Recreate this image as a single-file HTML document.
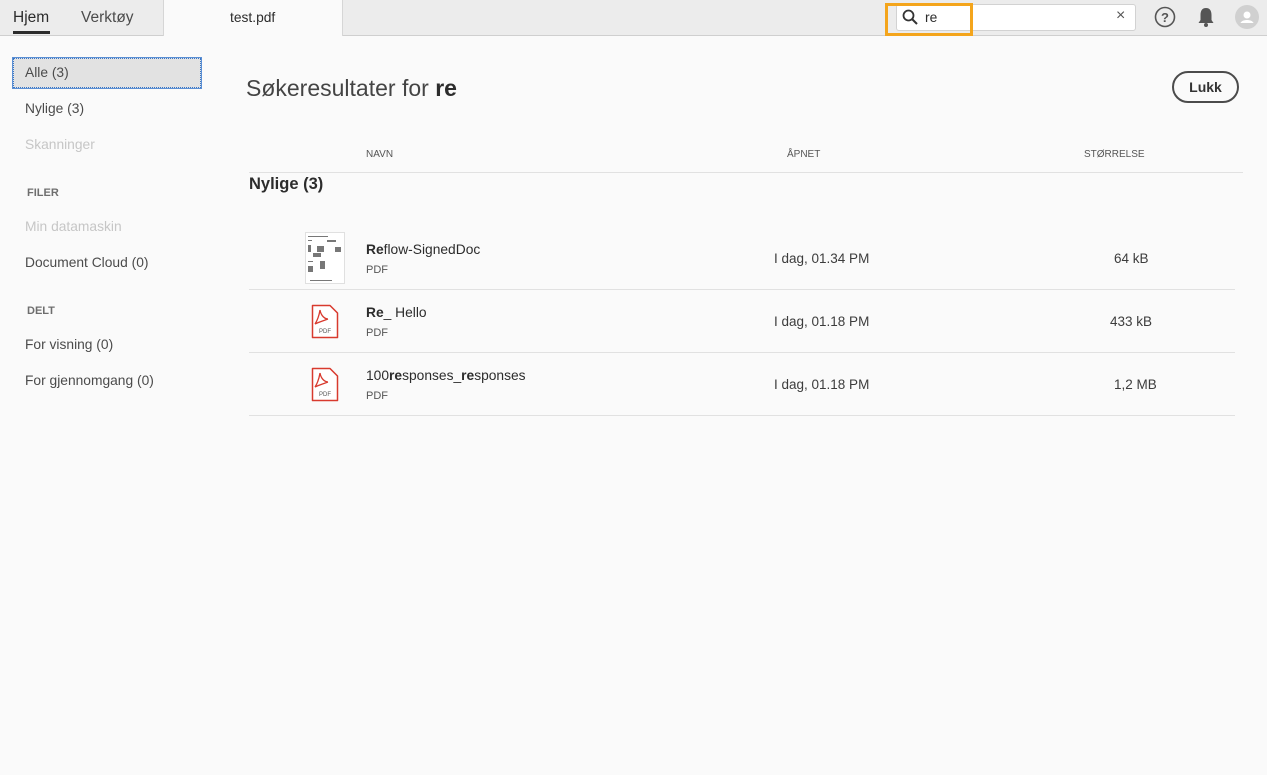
<!DOCTYPE html>
<html><head><meta charset="utf-8"><style>
*{margin:0;padding:0;box-sizing:border-box}
body{width:1267px;height:775px;background:#fafafa;font-family:"Liberation Sans",sans-serif;color:#2c2c2c;position:relative;overflow:hidden}
.abs{position:absolute;white-space:nowrap}
.top{position:absolute;left:0;top:0;width:1267px;height:36px;background:#ececec;border-bottom:1px solid #cfcfcf}
.side{font-size:13.8px;color:#4b4b4b}
.dis{color:#c6c6c6}
.hdr{font-size:11px;font-weight:bold;color:#6e6e6e}
.col{font-size:10px;color:#555}
.row{position:absolute;left:249px;width:986px;height:1px;background:#e1e1e1}
.nm{font-size:13.8px;color:#2c2c2c}
.sub{font-size:11px;color:#555}
.cell{font-size:13.5px;color:#3c3c3c}
</style></head><body>
<div class="top"></div>
<div class="abs" style="left:13px;top:9px;font-size:15.5px;color:#2c2c2c">Hjem</div>
<div class="abs" style="left:13px;top:31px;width:37px;height:3px;background:#2c2c2c"></div>
<div class="abs" style="left:81px;top:9px;font-size:15.5px;color:#4b4b4b">Verktøy</div>
<div class="abs" style="left:163px;top:0;width:180px;height:36px;background:#fafafa;border-left:1px solid #d6d6d6;border-right:1px solid #d6d6d6"></div>
<div class="abs" style="left:230px;top:10px;font-size:13.8px;color:#2c2c2c">test.pdf</div>
<div class="abs" style="left:896px;top:4px;width:240px;height:27px;background:#fff;border:1px solid #d2d2d2;border-radius:3px"></div>
<div class="abs" style="left:885px;top:3px;width:88px;height:33px;border:3px solid #f4a51c"></div>
<svg class="abs" style="left:901px;top:8px" width="18" height="18" viewBox="0 0 18 18"><circle cx="7.5" cy="7.5" r="5" fill="none" stroke="#333" stroke-width="1.8"/><path d="M11 11 L16 16" stroke="#333" stroke-width="2"/></svg>
<div class="abs" style="left:925px;top:10px;font-size:13.8px">re</div>
<div class="abs" style="left:1116px;top:7px;font-size:16px;color:#555">×</div>
<svg class="abs" style="left:1154px;top:6px" width="22" height="22" viewBox="0 0 22 22"><circle cx="11" cy="11" r="9.5" fill="none" stroke="#555" stroke-width="1.6"/><text x="11" y="16" font-size="13" font-weight="bold" text-anchor="middle" fill="#555" font-family="Liberation Sans">?</text></svg>
<svg class="abs" style="left:1196px;top:6px" width="20" height="22" viewBox="0 0 20 22"><path d="M10 2 C6 2 4.5 5 4.5 9 L4.5 14 L2.5 17 L17.5 17 L15.5 14 L15.5 9 C15.5 5 14 2 10 2Z" fill="#555"/><circle cx="10" cy="19" r="2" fill="#555"/></svg>
<svg class="abs" style="left:1235px;top:5px" width="24" height="24" viewBox="0 0 24 24"><circle cx="12" cy="12" r="12" fill="#d0d0d0"/><circle cx="12" cy="10" r="3.5" fill="#fff"/><path d="M5.5 18 C7 14 17 14 18.5 18Z" fill="#fff"/></svg>

<div class="abs" style="left:13px;top:58px;width:188px;height:30px;background:#e2e2e2;border:1px dotted #3a76c4;outline:1px solid #5b8fd4"></div>
<div class="abs side" style="left:25px;top:65px">Alle (3)</div>
<div class="abs side" style="left:25px;top:101px">Nylige (3)</div>
<div class="abs side dis" style="left:25px;top:137px">Skanninger</div>
<div class="abs hdr" style="left:27px;top:187px">FILER</div>
<div class="abs side dis" style="left:25px;top:219px">Min datamaskin</div>
<div class="abs side" style="left:25px;top:255px">Document Cloud (0)</div>
<div class="abs hdr" style="left:27px;top:305px">DELT</div>
<div class="abs side" style="left:25px;top:337px">For visning (0)</div>
<div class="abs side" style="left:25px;top:373px">For gjennomgang (0)</div>

<div class="abs" style="left:246px;top:75px;font-size:23px;color:#444">Søkeresultater for <b style="color:#2c2c2c">re</b></div>
<div class="abs" style="left:1172px;top:71px;width:67px;height:32px;border:2px solid #4b4b4b;border-radius:16px;font-size:14px;font-weight:bold;text-align:center;line-height:28px;color:#333">Lukk</div>

<div class="abs col" style="left:366px;top:149px">NAVN</div>
<div class="abs col" style="left:787px;top:149px">ÅPNET</div>
<div class="abs col" style="left:1084px;top:149px">STØRRELSE</div>
<div class="row" style="top:172px;width:994px"></div>
<div class="abs" style="left:249px;top:175px;font-size:16.5px;font-weight:bold;color:#2c2c2c">Nylige (3)</div>

<div class="abs" style="left:305px;top:232px;width:40px;height:52px;background:#fff;border:1px solid #e0e0e0"></div>
<svg class="abs" style="left:307px;top:236px" width="36" height="46" viewBox="0 0 36 46"><g fill="#777"><rect x="1" y="0" width="20" height="1"/><rect x="1" y="4" width="4" height="1"/><rect x="20" y="4" width="9" height="2"/><rect x="1" y="9" width="3" height="7"/><rect x="10" y="10" width="7" height="6"/><rect x="28" y="11" width="6" height="5"/><rect x="6" y="17" width="8" height="4"/><rect x="1" y="25" width="5" height="1"/><rect x="13" y="25" width="5" height="8"/><rect x="1" y="30" width="5" height="6"/><rect x="3" y="44" width="22" height="1"/></g></svg>
<div class="abs nm" style="left:366px;top:242px"><b>Re</b>flow-SignedDoc</div>
<div class="abs sub" style="left:366px;top:264px">PDF</div>
<div class="abs cell" style="left:774px;top:251px">I dag, 01.34 PM</div>
<div class="abs cell" style="left:1114px;top:251px">64 kB</div>
<div class="row" style="top:289px"></div>

<svg class="abs" style="left:311px;top:304px" width="28" height="35" viewBox="0 0 28 35"><path d="M1.5 1.5 H19 L26.5 9 V33.5 H1.5Z" fill="#fff" stroke="#d83a2e" stroke-width="1.5" stroke-linejoin="round"/><path d="M9 6 C8 12 6 17 4 20 M9 6 C10 12 14 15 17 15 M4 20 C8 18 12 17 17 15" fill="none" stroke="#d83a2e" stroke-width="1.3"/><text x="14" y="29" font-size="6" text-anchor="middle" fill="#555" font-family="Liberation Sans">PDF</text></svg>
<div class="abs nm" style="left:366px;top:305px"><b>Re</b>_ Hello</div>
<div class="abs sub" style="left:366px;top:327px">PDF</div>
<div class="abs cell" style="left:774px;top:314px">I dag, 01.18 PM</div>
<div class="abs cell" style="left:1110px;top:314px">433 kB</div>
<div class="row" style="top:352px"></div>

<svg class="abs" style="left:311px;top:367px" width="28" height="35" viewBox="0 0 28 35"><path d="M1.5 1.5 H19 L26.5 9 V33.5 H1.5Z" fill="#fff" stroke="#d83a2e" stroke-width="1.5" stroke-linejoin="round"/><path d="M9 6 C8 12 6 17 4 20 M9 6 C10 12 14 15 17 15 M4 20 C8 18 12 17 17 15" fill="none" stroke="#d83a2e" stroke-width="1.3"/><text x="14" y="29" font-size="6" text-anchor="middle" fill="#555" font-family="Liberation Sans">PDF</text></svg>
<div class="abs nm" style="left:366px;top:368px">100<b>re</b>sponses_<b>re</b>sponses</div>
<div class="abs sub" style="left:366px;top:390px">PDF</div>
<div class="abs cell" style="left:774px;top:377px">I dag, 01.18 PM</div>
<div class="abs cell" style="left:1114px;top:377px">1,2 MB</div>
<div class="row" style="top:415px"></div>
</body></html>
